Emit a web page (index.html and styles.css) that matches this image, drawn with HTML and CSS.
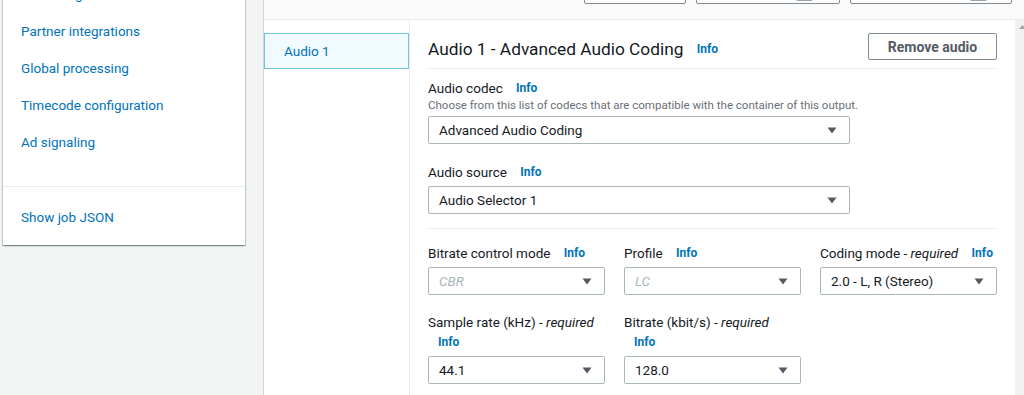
FILE: index.html
```html
<!DOCTYPE html>
<html lang="en">
<head>
<meta charset="utf-8">
<title>Audio settings</title>
<link rel="stylesheet" href="styles.css">
</head>
<body>
<div class="app">
  <aside class="sidebar">
    <nav class="navcard">
      <ul class="navlist">
        <li><a class="navlink">AWS integration</a></li>
        <li><a class="navlink">Partner integrations</a></li>
        <li><a class="navlink">Global processing</a></li>
        <li><a class="navlink">Timecode configuration</a></li>
        <li><a class="navlink">Ad signaling</a></li>
      </ul>
      <div class="navfoot"><a class="navlink">Show job JSON</a></div>
    </nav>
  </aside>
  <section class="panel">
    <div class="topbar">
      <button class="btn tb-btn tb1" aria-label="Cancel"></button>
      <button class="btn tb-btn tb2" aria-label="Templates"><span class="tb-icon"></span></button>
      <button class="btn tb-btn tb3" aria-label="Create"><span class="tb-icon"></span></button>
    </div>
    <div class="main">
      <div class="tabs">
        <div class="tab active">Audio 1</div>
      </div>
      <div class="content">
        <div class="header">
          <h2 class="title">Audio 1 - Advanced Audio Coding <a class="info">Info</a></h2>
          <button class="btn remove">Remove audio</button>
        </div>

        <div class="field first">
          <div class="label-wrap">
            <div class="label">Audio codec <a class="info">Info</a></div>
            <div class="desc">Choose from this list of codecs that are compatible with the container of this output.</div>
          </div>
          <div class="select wide"><span class="val">Advanced Audio Coding</span><svg class="caret" width="10" height="7" viewBox="0 0 10 7"><polygon points="0.5,0.5 9.5,0.5 5,6.5"/></svg></div>
        </div>

        <div class="field">
          <div class="label-wrap">
            <div class="label">Audio source <a class="info">Info</a></div>
          </div>
          <div class="select wide"><span class="val">Audio Selector 1</span><svg class="caret" width="10" height="7" viewBox="0 0 10 7"><polygon points="0.5,0.5 9.5,0.5 5,6.5"/></svg></div>
        </div>

        <div class="divider"></div>

        <div class="grid3 row3">
          <div class="cell">
            <div class="label-wrap"><div class="label">Bitrate control mode <a class="info">Info</a></div></div>
            <div class="select disabled"><span class="val">CBR</span><svg class="caret" width="10" height="7" viewBox="0 0 10 7"><polygon points="0.5,0.5 9.5,0.5 5,6.5"/></svg></div>
          </div>
          <div class="cell">
            <div class="label-wrap"><div class="label">Profile <a class="info">Info</a></div></div>
            <div class="select disabled"><span class="val">LC</span><svg class="caret" width="10" height="7" viewBox="0 0 10 7"><polygon points="0.5,0.5 9.5,0.5 5,6.5"/></svg></div>
          </div>
          <div class="cell">
            <div class="label-wrap"><div class="label">Coding mode - <i>required</i> <a class="info">Info</a></div></div>
            <div class="select"><span class="val">2.0 - L, R (Stereo)</span><svg class="caret" width="10" height="7" viewBox="0 0 10 7"><polygon points="0.5,0.5 9.5,0.5 5,6.5"/></svg></div>
          </div>
        </div>

        <div class="grid3 row4">
          <div class="cell">
            <div class="label-wrap"><div class="label">Sample rate (kHz) - <i>required</i> <a class="info">Info</a></div></div>
            <div class="select"><span class="val">44.1</span><svg class="caret" width="10" height="7" viewBox="0 0 10 7"><polygon points="0.5,0.5 9.5,0.5 5,6.5"/></svg></div>
          </div>
          <div class="cell">
            <div class="label-wrap"><div class="label">Bitrate (kbit/s) - <i>required</i> <a class="info">Info</a></div></div>
            <div class="select"><span class="val">128.0</span><svg class="caret" width="10" height="7" viewBox="0 0 10 7"><polygon points="0.5,0.5 9.5,0.5 5,6.5"/></svg></div>
          </div>
        </div>
      </div>
      <div class="scrollbar">
        <svg class="scroll-arrow" width="9" height="12" viewBox="0 0 9 12"><polygon points="4,9 11,9 7.5,5"/></svg>
      </div>
    </div>
  </section>
</div>
</body>
</html>
```

FILE: styles.css
```css
* { box-sizing: border-box; }

html, body {
  margin: 0;
  padding: 0;
}

body {
  background: #f2f3f3;
  font-family: Roboto, "Liberation Sans", Arial, sans-serif;
  color: #16191f;
  font-size: 13.5px;
}

.app {
  display: flex;
  width: 1024px;
  height: 395px;
  overflow: hidden;
}

/* ---------- sidebar ---------- */
.sidebar {
  width: 263px;
  flex: none;
  padding-left: 3px;
  background: #f2f3f3;
}

.navcard {
  width: 242px;
  margin-top: -24px;
  background: #fff;
  box-shadow: 0 1px 1px 0 rgba(0, 28, 36, 0.3),
              1px 1px 1px 0 rgba(0, 28, 36, 0.15),
              -1px 1px 1px 0 rgba(0, 28, 36, 0.15);
}

.navlist {
  list-style: none;
  margin: 0;
  padding: 0 0 25px 0;
}

.navlist li {
  height: 37px;
  line-height: 37px;
  padding-left: 18px;
}

.navlink {
  color: #0073bb;
  font-size: 13.5px;
  text-decoration: none;
  cursor: pointer;
}

.navfoot {
  border-top: 1px solid #eaeded;
  padding: 12px 0 9px 18px;
  line-height: 37px;
}

/* ---------- panel ---------- */
.panel {
  flex: 1;
  display: flex;
  flex-direction: column;
  border-left: 1px solid #d2d6d6;
  min-width: 0;
}

.btn {
  font-family: Roboto, "Liberation Sans", Arial, sans-serif;
  background: #fff;
  border: 1px solid #7f8b95;
  border-radius: 2px;
  color: #545b64;
  font-weight: 700;
  font-size: 14px;
  padding: 0;
  cursor: pointer;
}

.topbar {
  height: 20px;
  flex: none;
  background: #fafafa;
  border-bottom: 1px solid #eaeded;
  display: flex;
  justify-content: flex-end;
  align-items: flex-end;
  gap: 10px;
  padding: 0 12px 15px 0;
}

.tb-btn {
  height: 30px;
  flex: none;
  display: flex;
  align-items: flex-end;
  justify-content: flex-end;
}

.tb1 { width: 102px; }
.tb2 { width: 144px; padding-right: 26px; }
.tb3 { width: 162px; padding-right: 24px; }

.tb-icon {
  width: 17px;
  height: 16px;
  margin-bottom: 2px;
  background: #9aa3ab;
  border-radius: 2px;
}

.main {
  flex: 1;
  display: flex;
  background: #fff;
  min-height: 0;
}

.tabs {
  width: 146px;
  flex: none;
  border-right: 1px solid #eaeded;
  padding-top: 13px;
}

.tab {
  height: 36px;
  line-height: 34px;
  padding-left: 19px;
  color: #0073bb;
  font-size: 13.5px;
}

.tab.active {
  background: #f1faff;
  border: 1px solid #6ec6e2;
}

.content {
  flex: 1;
  padding: 13px 18px 0 18px;
  min-width: 0;
}

.scrollbar {
  width: 9px;
  flex: none;
  background: #f1f1f1;
  overflow: hidden;
}

.scroll-arrow {
  display: block;
  fill: #a3a3a3;
}

/* ---------- header ---------- */
.header {
  display: flex;
  justify-content: space-between;
  align-items: flex-start;
  padding-bottom: 7px;
  border-bottom: 1px solid #eaeded;
}

.title {
  margin: 0;
  padding-top: 4px;
  font-size: 17.3px;
  font-weight: 400;
  line-height: 24px;
  color: #16191f;
}

.title .info {
  margin-left: 9px;
  vertical-align: 2px;
}

.remove {
  width: 129px;
  height: 27px;
}

/* ---------- form ---------- */
.info {
  font-size: 12px;
  font-weight: 700;
  line-height: 1;
  color: #0073bb;
  margin-left: 10px;
  vertical-align: 1px;
  cursor: pointer;
}

.field { margin-top: 18px; }
.field.first { margin-top: 9px; }

.label-wrap { margin-bottom: 4px; }

.label {
  font-size: 13.5px;
  line-height: 20px;
  color: #16191f;
}

.label i { font-style: italic; }

.desc {
  font-size: 11.5px;
  line-height: 14px;
  color: #687078;
}

.select {
  height: 28px;
  border: 1px solid #aab7b8;
  border-radius: 2px;
  background: #fff;
  display: flex;
  align-items: center;
  justify-content: space-between;
  padding: 0 12px 0 10px;
  font-size: 13.5px;
  color: #16191f;
}

.select.wide { width: 422px; }

.select.disabled .val {
  color: #aab7b8;
  font-style: italic;
}

.caret {
  display: block;
  fill: #545b64;
  flex: none;
}

.divider {
  margin-top: 14px;
  border-top: 1px solid #eaeded;
}

.grid3 {
  display: grid;
  grid-template-columns: repeat(3, 1fr);
  column-gap: 19px;
}

.row3 { margin-top: 14px; }
.row4 { margin-top: 17px; }
```
